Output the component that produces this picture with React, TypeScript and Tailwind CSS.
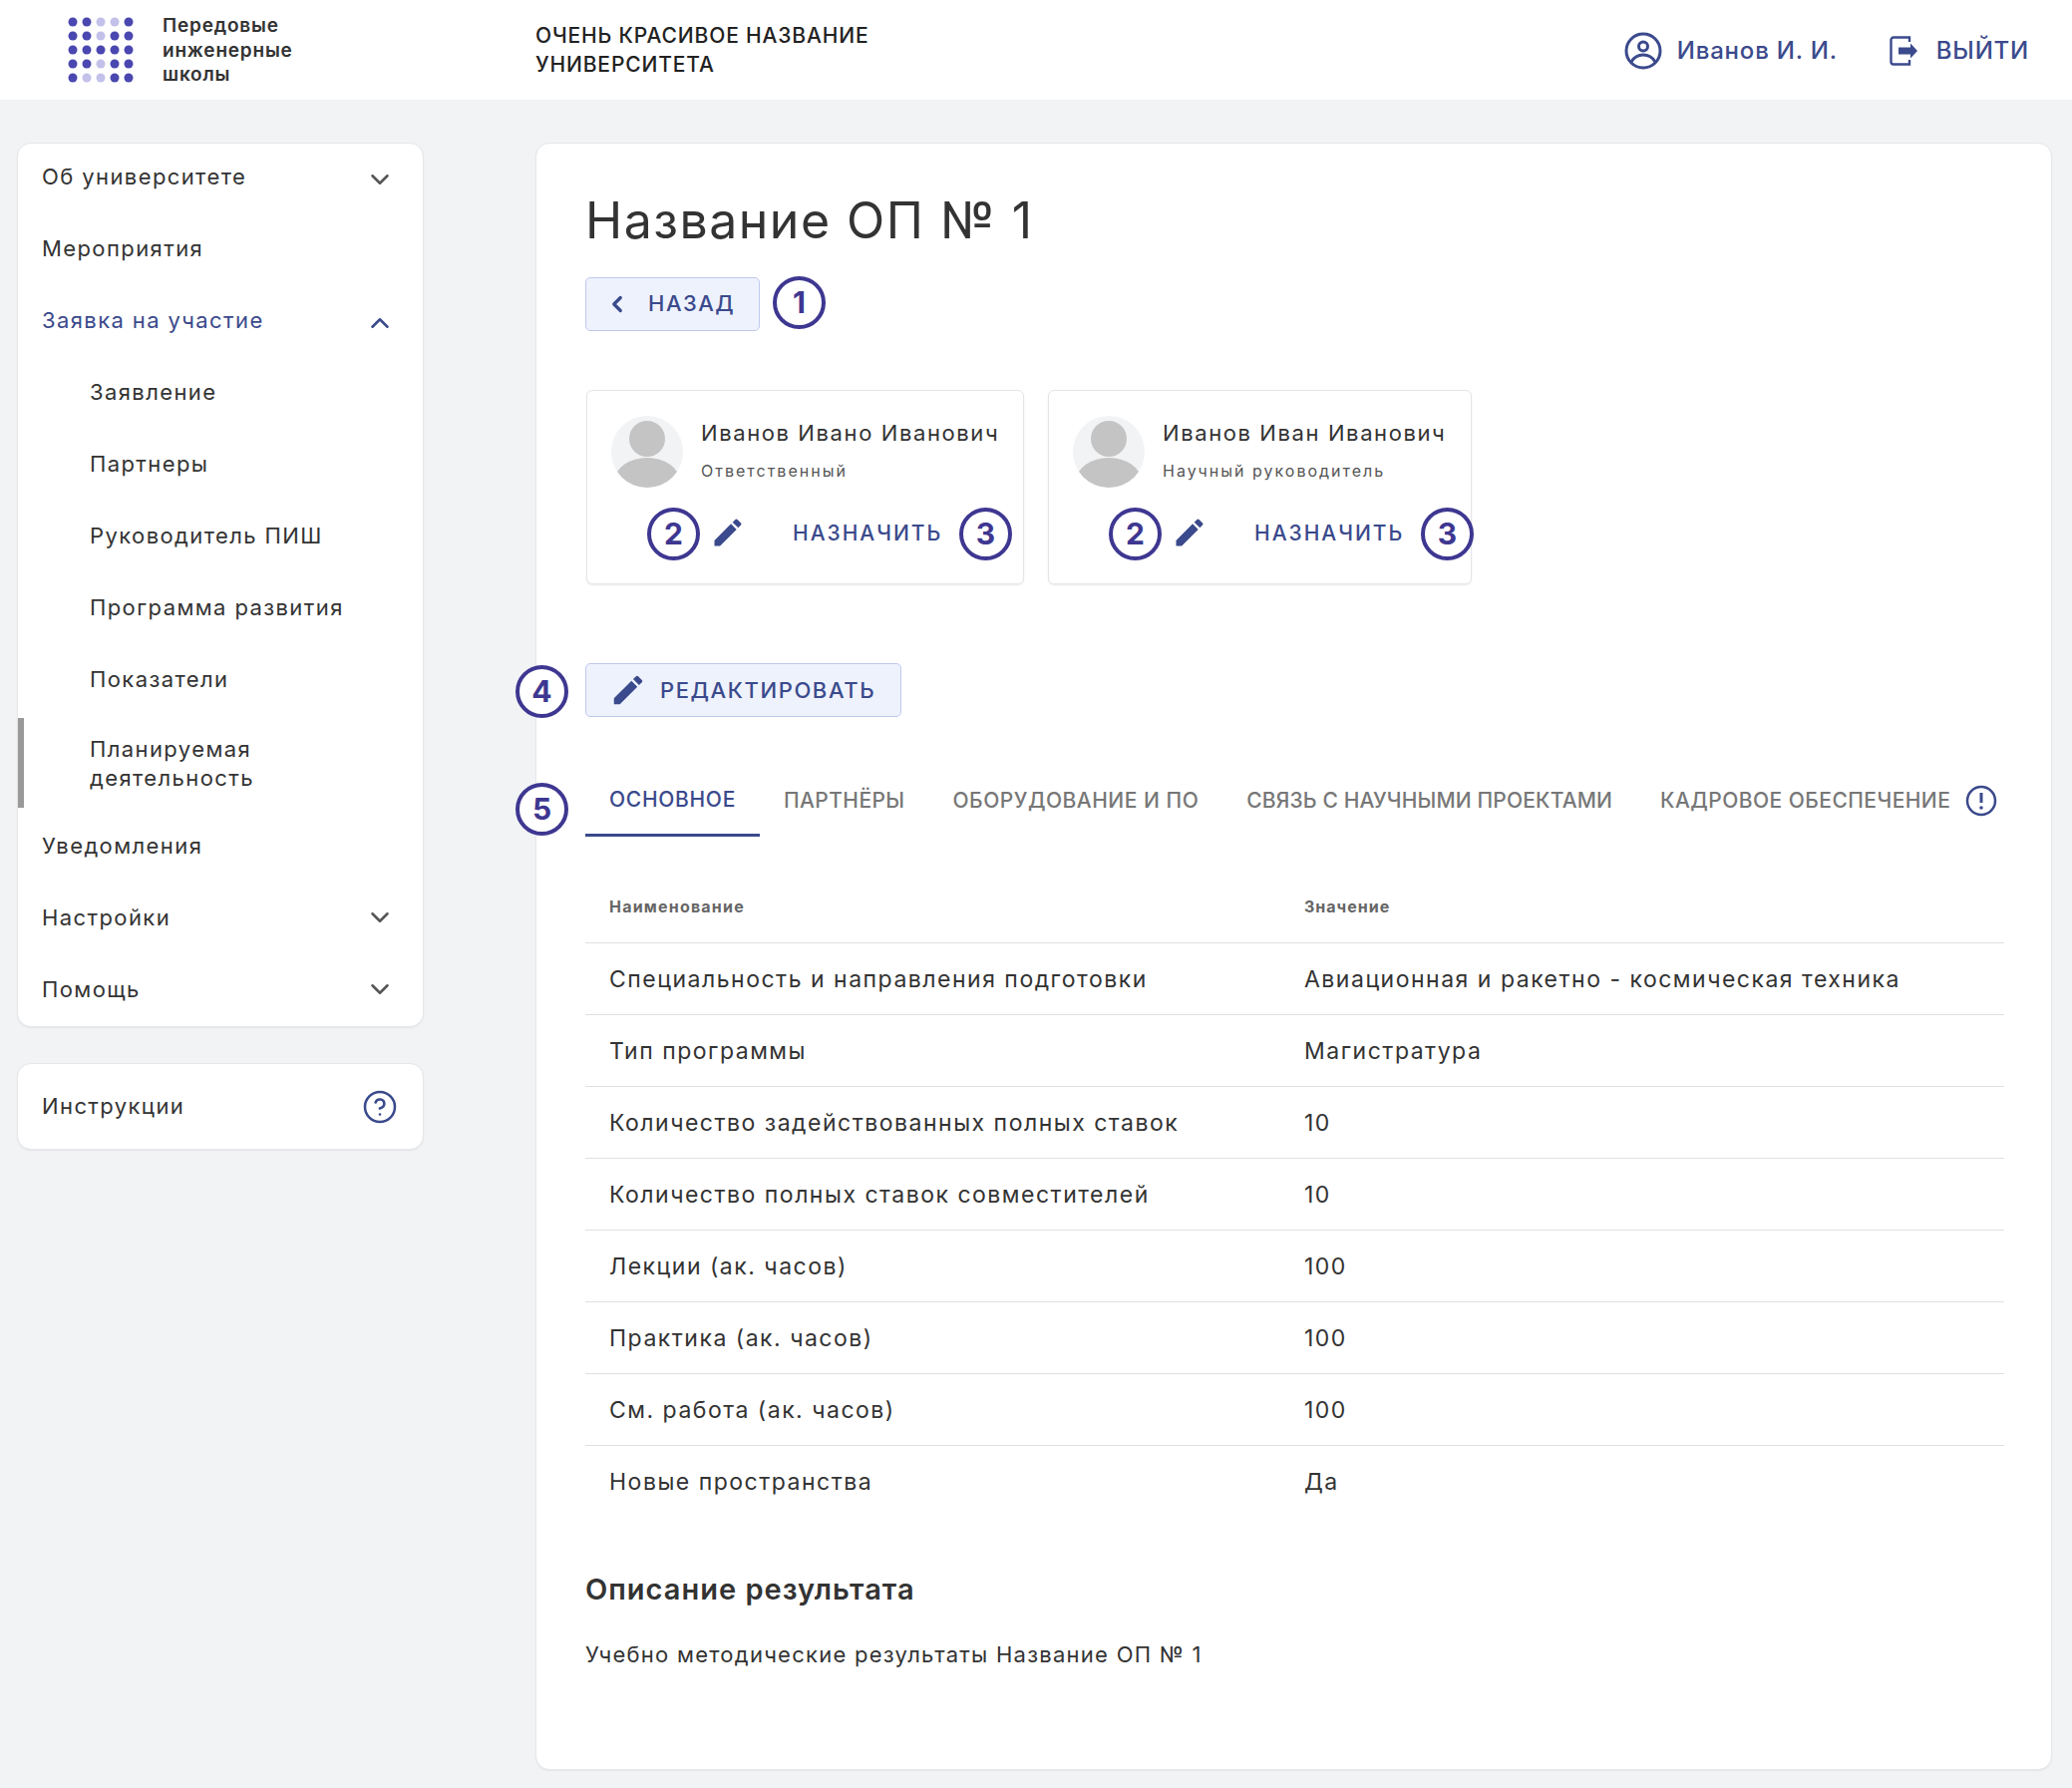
import { ChevronDown, ChevronLeft, ChevronUp, CircleHelp } from 'lucide-react';

const INK = 'text-[#3b4a8c]';

const menuTop = [
  { label: 'Об университете', chevron: 'down' },
  { label: 'Мероприятия' },
  { label: 'Заявка на участие', chevron: 'up', active: true },
];
const subMenu = ['Заявление', 'Партнеры', 'Руководитель ПИШ', 'Программа развития', 'Показатели'];
const menuBottom = [
  { label: 'Уведомления' },
  { label: 'Настройки', chevron: 'down' },
  { label: 'Помощь', chevron: 'down' },
];

const tabs = [
  { label: 'ОСНОВНОЕ', tracking: 'tracking-[0.7px]' },
  { label: 'ПАРТНЁРЫ', tracking: 'tracking-[0.4px]' },
  { label: 'ОБОРУДОВАНИЕ И ПО', tracking: 'tracking-[0.5px]' },
  { label: 'СВЯЗЬ С НАУЧНЫМИ ПРОЕКТАМИ', tracking: 'tracking-[0.15px]' },
  { label: 'КАДРОВОЕ ОБЕСПЕЧЕНИЕ', tracking: 'tracking-[0.45px]' },
];

const rows = [
  ['Специальность и направления подготовки', 'Авиационная и ракетно - космическая техника'],
  ['Тип программы', 'Магистратура'],
  ['Количество задействованных полных ставок', '10'],
  ['Количество полных ставок совместителей', '10'],
  ['Лекции (ак. часов)', '100'],
  ['Практика (ак. часов)', '100'],
  ['См. работа (ак. часов)', '100'],
  ['Новые пространства', 'Да'],
];

const D = '#4a47b0';
const L = '#c3c1ea';
const logoDots = [
  [D, D, L, L, D],
  [D, D, L, D, D],
  [D, D, D, D, D],
  [D, D, L, D, D],
  [D, L, L, D, D],
];

const Logo = () => (
  <svg width="66" height="66" viewBox="0 0 66 66" className="shrink-0">
    {logoDots.map((row, y) =>
      row.map((fill, x) => <circle key={`${x}-${y}`} cx={5 + x * 14} cy={5 + y * 14} r="4.5" fill={fill} />),
    )}
  </svg>
);

const Pencil = ({ size = 36 }: { size?: number }) => (
  <svg width={size} height={size} viewBox="0 0 24 24" fill="#3b4a8c">
    <path d="M3 17.25V21h3.75L17.81 9.94l-3.75-3.75L3 17.25zM20.71 7.04a1 1 0 0 0 0-1.41l-2.34-2.34a1 1 0 0 0-1.41 0l-1.83 1.83 3.75 3.75 1.83-1.83z" />
  </svg>
);

const Avatar = () => (
  <svg width="72" height="72" viewBox="0 0 72 72" className="shrink-0">
    <clipPath id="avatar-clip">
      <circle cx="36" cy="36" r="36" />
    </clipPath>
    <circle cx="36" cy="36" r="36" fill="#f2f3f5" />
    <circle cx="36" cy="23" r="18" fill="#c4c4c4" />
    <ellipse cx="36" cy="64" rx="32" ry="22" fill="#c4c4c4" clipPath="url(#avatar-clip)" />
  </svg>
);

const Mark = ({ n, className = '' }: { n: number; className?: string }) => (
  <div
    className={`flex h-[53px] w-[53px] shrink-0 items-center justify-center rounded-full border-[4px] border-[#3e3791] bg-white text-[30px] font-bold text-[#3e3791] ${className}`}
  >
    {n}
  </div>
);

const Person = ({ name, role, width }: { name: string; role: string; width: string }) => (
  <div className={`h-[195px] rounded-[6px] border border-[#e4e5e8] bg-white pl-[24px] pt-[25px] shadow-[0_1px_2px_rgba(0,0,0,0.08)] ${width}`}>
    <div className="flex gap-[18px]">
      <Avatar />
      <div className="whitespace-nowrap">
        <div className="mt-[2px] text-[22px] leading-[30px] tracking-[1.6px] text-[#333]">{name}</div>
        <div className="mt-[11px] text-[16px] leading-[24px] tracking-[2px] text-[#555]">{role}</div>
      </div>
    </div>
    <div className="mt-[20px] flex items-center pl-[36px]">
      <Mark n={2} />
      <span className="ml-[10px] mb-[3px]">
        <Pencil />
      </span>
      <span className={`ml-[47px] mb-[2px] w-[167px] shrink-0 whitespace-nowrap text-[21px] font-medium tracking-[2px] ${INK}`}>НАЗНАЧИТЬ</span>
      <Mark n={3} />
    </div>
  </div>
);

export default function App() {
  return (
    <div className="min-h-[1793px] w-[2078px] bg-[#f2f3f5] font-['Inter',sans-serif] text-[#333]">
      <header className="flex h-[100px] items-center bg-white pl-[68px]">
        <Logo />
        <div className="ml-[29px] mt-[2px] w-[180px] text-[19px] font-semibold leading-[24.5px] tracking-[0.8px] text-[#333]">
          Передовые инженерные школы
        </div>
        <div className="ml-[194px] w-[420px] text-[21px] font-medium leading-[29px] tracking-[0.85px] text-[#222]">
          ОЧЕНЬ КРАСИВОЕ НАЗВАНИЕ УНИВЕРСИТЕТА
        </div>
        <div className={`ml-auto mt-[1px] flex items-center pr-[43px] text-[24px] font-medium tracking-[0.8px] ${INK}`}>
          <svg width="38" height="38" viewBox="0 0 38 38" fill="none" stroke="#3b4a8c" strokeWidth="3">
            <circle cx="19" cy="19" r="17" />
            <circle cx="19" cy="14.500" r="4.500" />
            <path d="M7 30c3-5 7-7 12-7s9 2 12 7" />
          </svg>
          <span className="ml-[15px]">Иванов И. И.</span>
          <svg width="30" height="32" viewBox="0 0 30 32" className="ml-[51px]" fill="none">
            <path d="M21 7V2.5H5a2.5 2.5 0 0 0-2.5 2.5v22A2.5 2.5 0 0 0 5 29.500h16V25" stroke="#3b4a8c" strokeWidth="2.4" />
            <path d="M10 12.500h12V8.500l7 7.500-7 7.500v-4H10z" fill="#3b4a8c" />
          </svg>
          <span className="ml-[18px]">ВЫЙТИ</span>
        </div>
      </header>

      <div className="flex items-start pt-[43px]">
        <aside className="ml-[17px] w-[408px] shrink-0">
          <nav className="rounded-[14px] border border-[#e6e7ea] bg-white pb-[3px] shadow-[0_1px_2px_rgba(0,0,0,0.06)]">
            {menuTop.map((item) => (
              <div key={item.label} className={`flex h-[72px] items-center justify-between pb-[5px] pl-[24px] pr-[28px] text-[22px] tracking-[1.4px] ${item.active ? INK : 'text-[#333]'}`}>
                {item.label}
                {item.chevron === 'down' && <ChevronDown size={30} className="mt-[5px] text-[#555]" />}
                {item.chevron === 'up' && <ChevronUp size={30} className="mt-[5px]" />}
              </div>
            ))}
            {subMenu.map((label) => (
              <div key={label} className="flex h-[72px] items-center pb-[5px] pl-[72px] text-[22px] tracking-[1.4px] text-[#333]">
                {label}
              </div>
            ))}
            <div className="flex h-[90px] items-center border-l-[6px] border-[#999] pl-[66px] pt-[2px] text-[22px] leading-[29px] tracking-[1.4px] text-[#333]">
              Планируемая
              <br />
              деятельность
            </div>
            {menuBottom.map((item) => (
              <div key={item.label} className="flex h-[72px] items-center justify-between pl-[24px] pr-[28px] pt-[4px] text-[22px] tracking-[1.4px] text-[#333]">
                {item.label}
                {item.chevron && <ChevronDown size={30} className="mt-[-1px] text-[#555]" />}
              </div>
            ))}
          </nav>
          <div className="mt-[36px] flex h-[87px] items-center justify-between rounded-[14px] border border-[#e6e7ea] bg-white px-[24px] text-[22px] tracking-[1.4px] shadow-[0_1px_2px_rgba(0,0,0,0.06)]">
            Инструкции
            <CircleHelp size={36} strokeWidth={1.7} className={`mr-[1px] ${INK}`} />
          </div>
        </aside>

        <main className="ml-[112px] h-[1632px] w-[1521px] shrink-0 rounded-[14px] border border-[#e6e7ea] bg-white pl-[49px] pr-[47px] shadow-[0_1px_2px_rgba(0,0,0,0.06)]">
          <h1 className="pt-[47px] text-[50px] font-normal leading-[60px] tracking-[1.5px] text-[#333]">Название ОП № 1</h1>

          <div className="mt-[26px] flex items-center gap-[13px]">
            <button className={`flex h-[54px] w-[175px] items-center rounded-[5px] border border-[#bfc9ee] bg-[#eef2fd] pl-[18px] text-[22px] font-medium tracking-[1.5px] ${INK}`}>
              <ChevronLeft size={26} strokeWidth={3} />
              <span className="ml-[18px]">НАЗАД</span>
            </button>
            <Mark n={1} className="mb-[2px]" />
          </div>

          <div className="ml-[1px] mt-[59px] flex gap-[24px]">
            <Person name="Иванов Ивано Иванович" role="Ответственный" width="w-[439px]" />
            <Person name="Иванов Иван Иванович" role="Научный руководитель" width="w-[425px]" />
          </div>

          <div className="relative mt-[79px]">
            <Mark n={4} className="absolute left-[-70px] top-[2px]" />
            <button className={`flex h-[54px] w-[317px] items-center rounded-[5px] border border-[#bfc9ee] bg-[#eef2fd] pl-[23px] text-[22px] font-medium tracking-[1.6px] ${INK}`}>
              <Pencil size={38} />
              <span className="ml-[13px]">РЕДАКТИРОВАТЬ</span>
            </button>
          </div>

          <div className="relative mt-[60px] flex h-[60px] items-center">
            <Mark n={5} className="absolute left-[-70px] top-[6px]" />
            {tabs.map((tab, i) => (
              <div
                key={tab.label}
                className={`flex h-[60px] items-center whitespace-nowrap px-[24px] pb-[12px] text-[21px] font-medium ${tab.tracking} ${i === 0 ? `border-b-[3px] border-[#3b4a8c] ${INK}` : 'text-[#777]'}`}
              >
                {tab.label}
              </div>
            ))}
            <svg width="32" height="32" viewBox="0 0 32 32" className="ml-[-9px] mb-[12px]" fill="none">
              <circle cx="16" cy="16" r="14" stroke="#3b4a8c" strokeWidth="2.5" />
              <path d="M16 8v10" stroke="#3b4a8c" strokeWidth="3" />
              <circle cx="16" cy="23" r="1.8" fill="#3b4a8c" />
            </svg>
          </div>

          <table className="mt-[34px] w-full border-collapse text-left">
            <thead>
              <tr className="border-b border-[#dfe0e3]">
                <th className="h-[72px] w-[721px] pl-[24px] text-[16px] font-bold tracking-[1.2px] text-[#666]">Наименование</th>
                <th className="h-[72px] text-[16px] font-bold tracking-[1px] text-[#666]">Значение</th>
              </tr>
            </thead>
            <tbody>
              {rows.map(([name, value], i) => (
                <tr key={name} className={i < rows.length - 1 ? 'border-b border-[#dfe0e3]' : ''}>
                  <td className="h-[72px] pl-[24px] pt-[2px] text-[23px] tracking-[1.5px] text-[#333]">{name}</td>
                  <td className="h-[72px] pt-[2px] text-[23px] tracking-[1.5px] text-[#333]">{value}</td>
                </tr>
              ))}
            </tbody>
          </table>

          <h2 className="mt-[55px] text-[29px] font-semibold leading-[36px] tracking-[1px] text-[#333]">Описание результата</h2>
          <p className="mt-[32px] text-[22px] leading-[30px] tracking-[1.25px] text-[#333]">Учебно методические результаты Название ОП № 1</p>
        </main>
      </div>
    </div>
  );
}
